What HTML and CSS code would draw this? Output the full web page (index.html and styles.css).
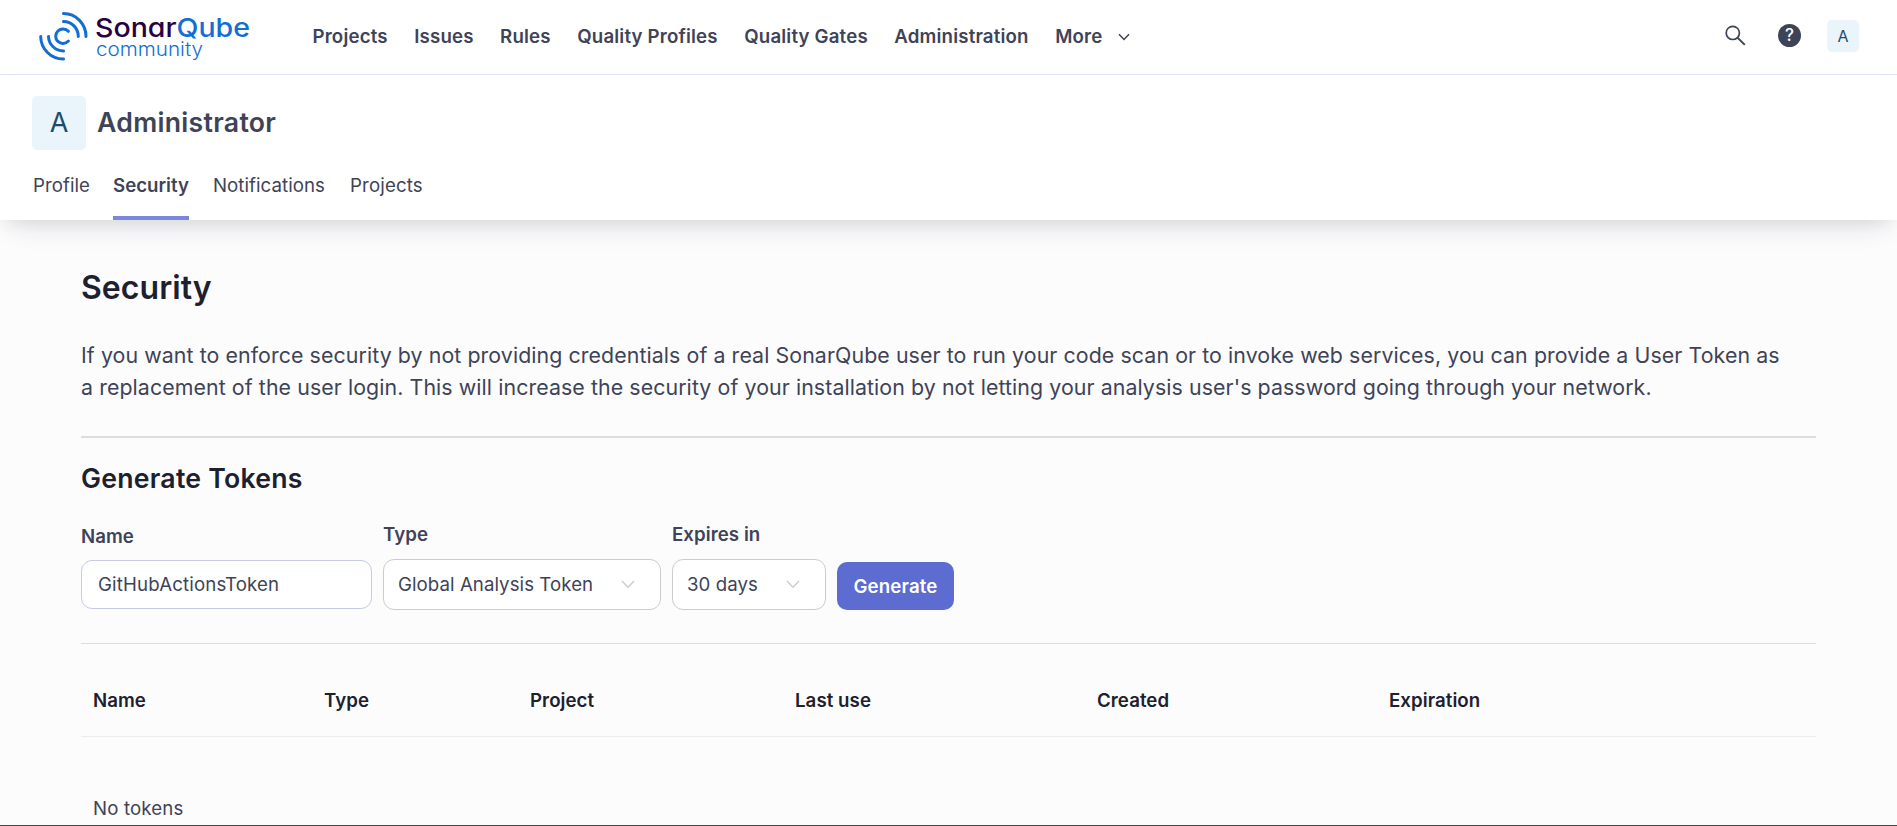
FILE: index.html
```html
<!DOCTYPE html>
<html lang="en">
<head>
<meta charset="utf-8">
<title>Security</title>
<link rel="stylesheet" href="styles.css">
</head>
<body>
<header class="topbar">
  <svg class="logo" viewBox="0 0 216 52" width="216" height="52" role="img" aria-label="SonarQube community">
    <g fill="none" stroke="#126ed3" stroke-width="3" stroke-linecap="round">
      <path d="M25.5 2.6A22.7 22.7 0 0 1 48 25.5"/>
      <path d="M25.5 10.4A15 15 0 0 1 40.3 25.5"/>
      <path d="M2.7 25.5A22.7 22.7 0 0 0 25.5 48"/>
      <path d="M10.5 25.5A15 15 0 0 0 25.5 40"/>
      <path d="M30.4 20.3A7.3 7.3 0 1 0 30.4 30.1"/>
    </g>
    <text class="logo-main" x="57" y="26" textLength="155" lengthAdjust="spacingAndGlyphs"><tspan fill="#290042">Sonar</tspan><tspan fill="#126ed3">Qube</tspan></text>
    <text class="logo-sub" x="58" y="45" textLength="107" lengthAdjust="spacingAndGlyphs">community</text>
  </svg>
  <nav class="main-nav">
    <a>Projects</a><a>Issues</a><a>Rules</a><a>Quality Profiles</a><a>Quality Gates</a><a>Administration</a><a class="more">More
      <svg width="12" height="8" viewBox="0 0 12 8"><path d="M1 1.2L6 6.4L11 1.2" fill="none" stroke="#3e4357" stroke-width="1.5"/></svg></a>
  </nav>
  <div class="tools">
    <svg width="21" height="21" viewBox="0 0 21 21" fill="none" stroke="#3e4357"><circle cx="7.8" cy="7.9" r="6.6" stroke-width="1.7"/><path d="M12.5 12.6L19.8 19.9" stroke-width="2"/></svg>
    <span class="help">?</span>
    <span class="avatar small">A</span>
  </div>
</header>
<section class="account">
  <div class="identity"><span class="avatar">A</span><span class="name">Administrator</span></div>
  <nav class="tabs"><a>Profile</a><a class="active">Security</a><a>Notifications</a><a>Projects</a></nav>
</section>
<main class="page">
  <h1>Security</h1>
  <p class="intro">If you want to enforce security by not providing credentials of a real SonarQube user to run your code scan or to invoke web services, you can provide a User Token as<br>a replacement of the user login. This will increase the security of your installation by not letting your analysis user's password going through your network.</p>
  <h2>Generate Tokens</h2>
  <form class="token-form">
    <div class="field"><label class="low">Name</label><div class="control input">GitHubActionsToken</div></div>
    <div class="field"><label>Type</label><div class="control select type">Global Analysis Token<svg width="14" height="9" viewBox="0 0 14 9"><path d="M1 1L7 7.2L13 1" fill="none" stroke="#ccc" stroke-width="1.4"/></svg></div></div>
    <div class="field"><label>Expires in</label><div class="control select expiry">30 days<svg width="14" height="9" viewBox="0 0 14 9"><path d="M1 1L7 7.2L13 1" fill="none" stroke="#ccc" stroke-width="1.4"/></svg></div></div>
    <button type="button">Generate</button>
  </form>
  <div class="tokens">
    <div class="row head"><span>Name</span><span>Type</span><span>Project</span><span>Last use</span><span>Created</span><span>Expiration</span></div>
    <div class="empty">No tokens</div>
  </div>
</main>
</body>
</html>
```
FILE: styles.css
```css
* { box-sizing: border-box; }
body {
  margin: 0;
  height: 826px;
  overflow: hidden;
  display: flex;
  flex-direction: column;
  background: #fcfcfd;
  border-bottom: 1px solid #444;
  color: #3e4357;
  font-family: Inter, sans-serif;
  font-size: 18.67px;
  letter-spacing: .06px;
}
.topbar {
  flex: none;
  height: 75px;
  padding: 0 38px;
  display: flex;
  align-items: center;
  background: #fff;
  border-bottom: 1px solid #e1e6f3;
}
.logo { margin-bottom: 1px; letter-spacing: 0; }
.logo-main { font: 450 26px Inter, sans-serif; font-feature-settings: "cv11"; }
.logo-sub { font: 350 18.5px Inter, sans-serif; fill: #126ed3; }
.main-nav {
  display: flex;
  gap: 26.5px;
  margin-left: 58.5px;
  line-height: 28px;
  font-weight: 600;
  letter-spacing: .17px;
  white-space: nowrap;
}
.more { display: flex; align-items: center; gap: 16px; }
.tools { display: flex; align-items: center; margin-left: auto; padding-bottom: 3px; }
.help {
  width: 23px;
  height: 23px;
  margin: 0 26px 0 32px;
  border-radius: 50%;
  background: #3e4357;
  color: #fff;
  font-size: 17px;
  font-weight: 500;
  line-height: 23px;
  text-align: center;
}
.avatar {
  width: 54px;
  height: 54px;
  border-radius: 5px;
  background: #e9f4fb;
  color: #1d4b6c;
  font-size: 27px;
  line-height: 53px;
  text-align: center;
}
.avatar.small { width: 32px; height: 32px; font-size: 16px; line-height: 32px; }
.account {
  flex: none;
  height: 145px;
  padding: 21px 32px 0;
  background: #fff;
  box-shadow: 0 15px 25px -10px rgba(29, 33, 47, .15), 0 5px 15px -3px rgba(29, 33, 47, .05);
}
.identity { display: flex; align-items: center; gap: 11px; }
.name { padding-bottom: 2px; font-size: 26.67px; font-weight: 600; letter-spacing: .28px; }
.tabs { display: flex; gap: 24px; padding-left: 1px; height: 70px; }
.tabs a { padding-top: 22px; line-height: 28px; border-bottom: 4px solid transparent; }
.tabs a:first-child { margin-right: -1px; }
.tabs a:last-child { margin-left: 1px; letter-spacing: .15px; }
.tabs .active { font-weight: 600; letter-spacing: 0; border-color: #7b87d9; }
.page { padding: 47px 81px 0; }
h1, h2 { margin: 0; color: #1d212f; font-weight: 600; }
h1 { font-size: 32px; line-height: 42px; }
.intro {
  margin: 30px 0 0;
  padding-bottom: 33px;
  border-bottom: 2px solid #ddd;
  font-size: 21.33px;
  line-height: 32px;
  letter-spacing: .09px;
  white-space: nowrap;
}
h2 { margin-top: 23px; margin-bottom: 1px; font-size: 26.67px; line-height: 34px; letter-spacing: .24px; }
.token-form {
  display: flex;
  align-items: flex-end;
  gap: 11px;
  height: 148px;
  padding-bottom: 33px;
  border-bottom: 1px solid #ddd;
}
.field { display: flex; flex-direction: column; }
label { margin-bottom: 10px; font-weight: 600; line-height: 28px; }
.low { margin-bottom: 9px; }
.control {
  display: flex;
  align-items: center;
  height: 51px;
  border: 1px solid #ccc;
  border-radius: 11px;
  background: #fff;
}
.control svg { margin-left: auto; }
.input { width: 291px; height: 49px; margin-bottom: 1px; padding-left: 16px; border-color: #c5cbe0; letter-spacing: .15px; }
.select { padding: 0 25px 1px 14px; }
.type { width: 278px; }
.expiry { width: 154px; }
button {
  width: 117px;
  height: 48px;
  padding: 0;
  border: 0;
  border-radius: 10px;
  background: #5d6cd0;
  color: #fff;
  font: 600 18.67px Inter, sans-serif;
  letter-spacing: .15px;
}
.row {
  display: grid;
  grid-template-columns: 231px 206px 265px 302px 292px 1fr;
  height: 93px;
  padding: 43px 12px 0;
  border-bottom: 1px solid #ececec;
  color: #1d212f;
  font-weight: 600;
  line-height: 28px;
}
.empty { padding: 58px 12px 0; line-height: 28px; letter-spacing: .15px; }
```
